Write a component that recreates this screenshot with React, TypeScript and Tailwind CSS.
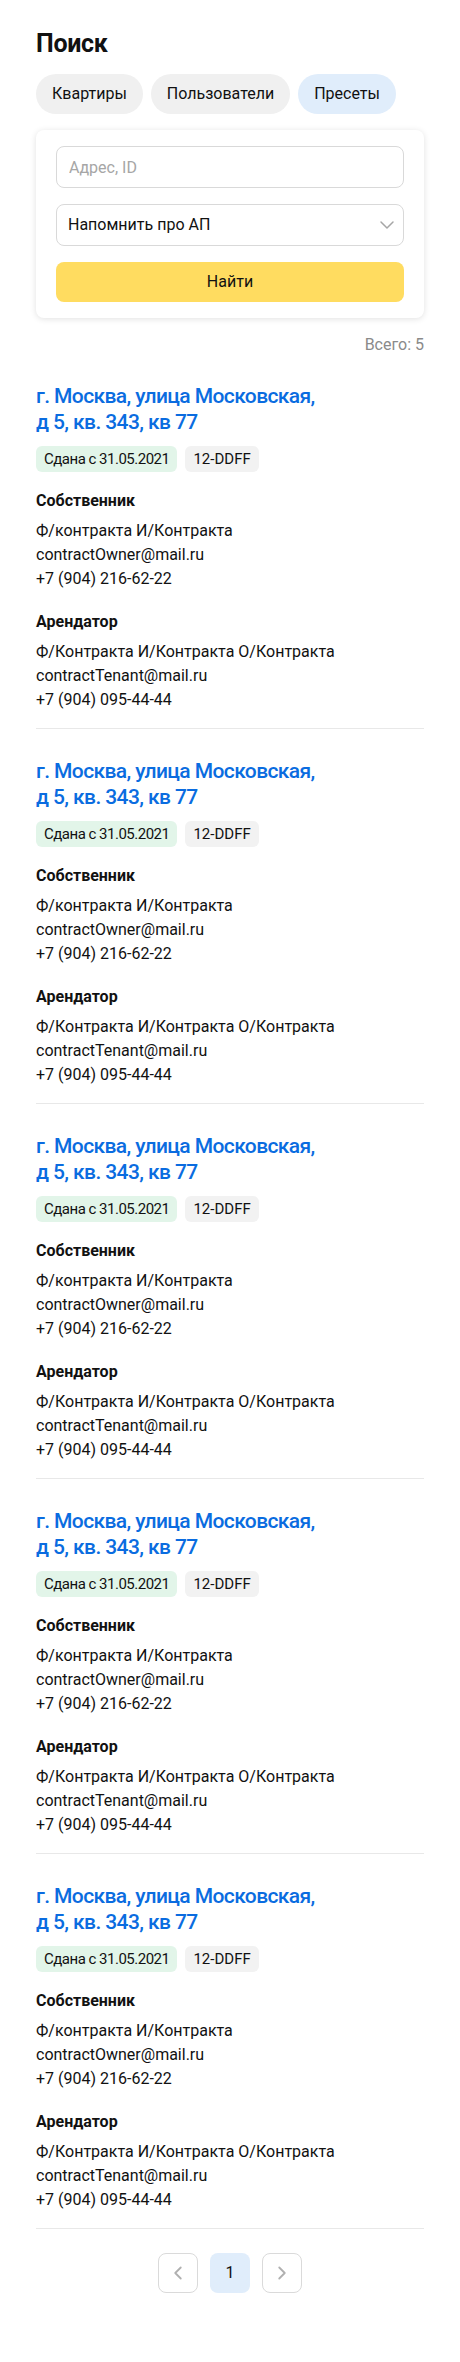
import { ChevronDown, ChevronLeft, ChevronRight } from 'lucide-react';

interface Person {
  name: string;
  email: string;
  phone: string;
}

interface Flat {
  address: string[];
  status: string;
  code: string;
  owner: Person;
  tenant: Person;
}

const flat: Flat = {
  address: ['г. Москва, улица Московская,', 'д 5, кв. 343, кв 77'],
  status: 'Сдана с 31.05.2021',
  code: '12-DDFF',
  owner: {
    name: 'Ф/контракта И/Контракта',
    email: 'contractOwner@mail.ru',
    phone: '+7 (904) 216-62-22',
  },
  tenant: {
    name: 'Ф/Контракта И/Контракта О/Контракта',
    email: 'contractTenant@mail.ru',
    phone: '+7 (904) 095-44-44',
  },
};

const flats: Flat[] = [flat, flat, flat, flat, flat];

function PersonBlock({ title, person }: { title: string; person: Person }) {
  return (
    <div>
      <div className="text-[16px] leading-6 font-bold">{title}</div>
      <div className="mt-[6px] text-[16px] leading-6">
        <div>{person.name}</div>
        <div>{person.email}</div>
        <div>{person.phone}</div>
      </div>
    </div>
  );
}

function FlatCard({ item, first }: { item: Flat; first: boolean }) {
  return (
    <div className={first ? 'pt-[26px] pb-4' : 'pt-[29px] pb-4 border-t border-[#e8e8e8]'}>
      <a className="block text-[21px] leading-[26px] font-medium text-[#0a6ce0] tracking-[-0.6px]">
        {item.address[0]}
        <br />
        {item.address[1]}
      </a>
      <div className="flex gap-2 mt-[11px]">
        <span className="h-[26px] px-2 flex items-center rounded-md bg-[#e2f5e9] text-[15px] tracking-[-0.5px]">
          {item.status}
        </span>
        <span className="h-[26px] px-2 flex items-center rounded-md bg-[#f2f2f2] text-[15px]">
          {item.code}
        </span>
      </div>
      <div className="mt-[17px] flex flex-col gap-[19px]">
        <PersonBlock title="Собственник" person={item.owner} />
        <PersonBlock title="Арендатор" person={item.tenant} />
      </div>
    </div>
  );
}

export default function App() {
  return (
    <div className="min-h-[2362px] bg-white px-9 pt-7 pb-[68px] font-['Roboto',sans-serif] text-[#111]">
      <h1 className="text-[25px] leading-8 font-bold tracking-[-0.3px]">Поиск</h1>

      {/* Tabs */}
      <div className="flex gap-2 mt-[14px]">
        <button className="h-10 px-4 rounded-full bg-[#f0f0f0] text-[16px]">Квартиры</button>
        <button className="h-10 px-4 rounded-full bg-[#f0f0f0] text-[16px]">Пользователи</button>
        <button className="h-10 px-4 rounded-full bg-[#e0edfb] text-[16px]">Пресеты</button>
      </div>

      {/* Search form */}
      <div className="mt-4 rounded-lg bg-white px-5 py-4 shadow-[0_1px_6px_rgba(0,0,0,0.12)] flex flex-col gap-4">
        <input
          type="text"
          placeholder="Адрес, ID"
          className="h-[42px] w-full rounded-lg border border-[#d9d9d9] px-3 text-[16px] placeholder-[#a6a6a6] outline-none"
        />
        <div className="h-[42px] w-full rounded-lg border border-[#d9d9d9] pl-[11px] pr-1 flex items-center justify-between text-[16px]">
          <span>Напомнить про АП</span>
          <ChevronDown size={24} strokeWidth={1.5} className="text-[#a6a6a6]" />
        </div>
        <button className="h-10 w-full rounded-lg bg-[#ffdc60] text-[16px]">Найти</button>
      </div>

      <div className="mt-[15px] text-right text-[16px] leading-6 text-[#8a8a8a]">Всего: 5</div>

      {/* Results */}
      <div>
        {flats.map((item, i) => (
          <FlatCard key={i} item={item} first={i === 0} />
        ))}
      </div>

      {/* Pagination */}
      <div className="border-t border-[#e8e8e8] pt-6 flex justify-center gap-3">
        <button className="w-10 h-10 rounded-lg border border-[#dadada] flex items-center justify-center text-[#b0b0b0]">
          <ChevronLeft size={22} strokeWidth={2} />
        </button>
        <button className="w-10 h-10 rounded-lg bg-[#e0edfb] flex items-center justify-center text-[16px]">1</button>
        <button className="w-10 h-10 rounded-lg border border-[#dadada] flex items-center justify-center text-[#b0b0b0]">
          <ChevronRight size={22} strokeWidth={2} />
        </button>
      </div>
    </div>
  );
}
